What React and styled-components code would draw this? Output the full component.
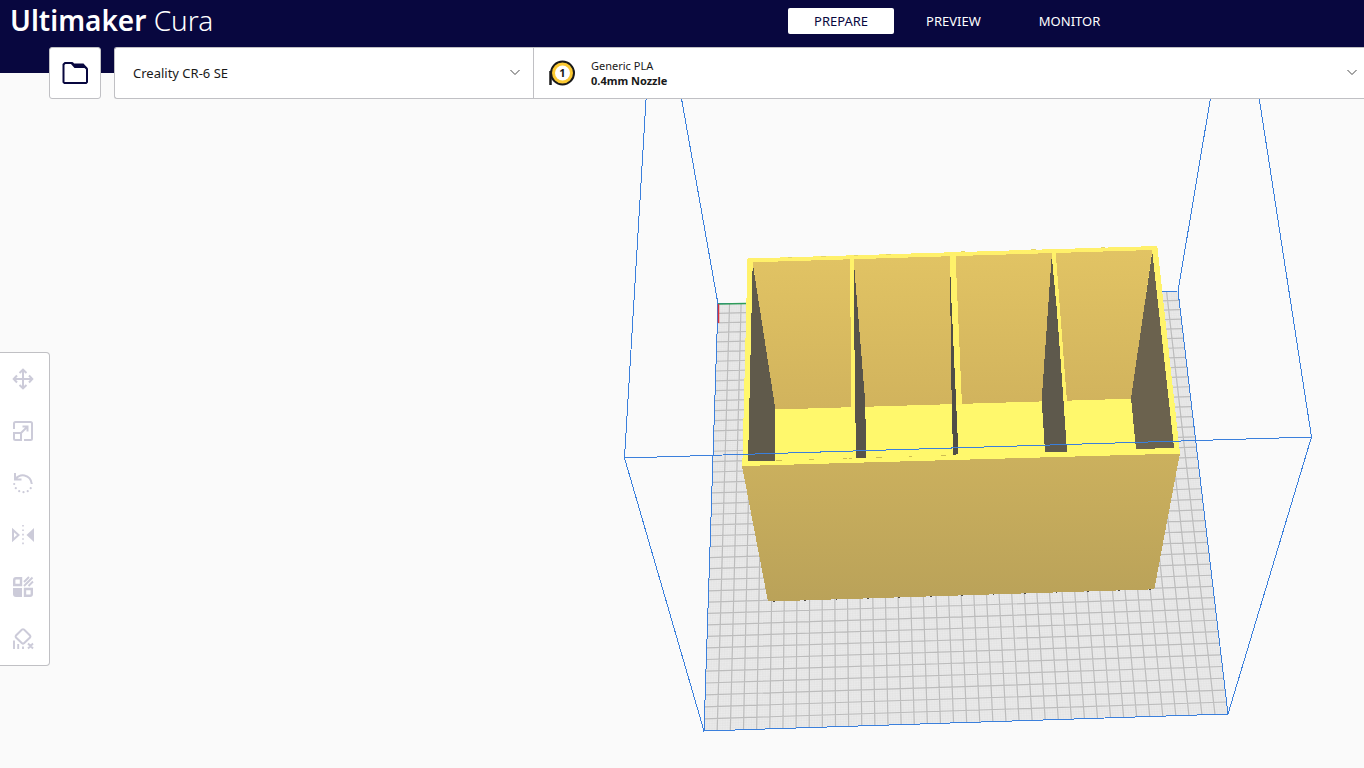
import React from "react";
import styled, { createGlobalStyle } from "styled-components";

const tools = [
  { name: "Move", icon: <MoveIcon /> },
  { name: "Scale", icon: <ScaleIcon /> },
  { name: "Rotate", icon: <RotateIcon /> },
  { name: "Mirror", icon: <MirrorIcon /> },
  { name: "Per Model Settings", icon: <MeshIcon /> },
  { name: "Support Blocker", icon: <BlockerIcon /> },
];

const App = () => {
  return (
    <Window>
      <GlobalStyle />
      <Scene />
      <Interface>
        <Header>
          <Logo>
            Ultimaker <span>Cura</span>
          </Logo>
          <Stages>
            <Stage $active>PREPARE</Stage>
            <Stage>PREVIEW</Stage>
            <Stage>MONITOR</Stage>
          </Stages>
        </Header>
        <ConfigRow>
          <OpenButton aria-label="Open file">
            <FolderIcon />
          </OpenButton>
          <Selectors>
            <Printer>
              <span>Creality CR-6 SE</span>
              <Chevron />
            </Printer>
            <Material>
              <SpoolIcon />
              <MaterialText>
                Generic PLA
                <strong>0.4mm Nozzle</strong>
              </MaterialText>
              <Chevron />
            </Material>
          </Selectors>
        </ConfigRow>
        <Toolbar>
          {tools.map((tool) => (
            <Tool key={tool.name} aria-label={tool.name}>
              {tool.icon}
            </Tool>
          ))}
        </Toolbar>
      </Interface>
    </Window>
  );
};

// Build plate corners: back left, back right, front right, front left
const plate = [
  [718, 304],
  [1178, 291],
  [1228, 714],
  [704, 731],
];
const cells = 40;

// Perspective mapping of the unit square onto the plate
const project = (u, v) => {
  const [[x0, y0], [x1, y1], [x2, y2], [x3, y3]] = plate;
  const dx1 = x1 - x2;
  const dx2 = x3 - x2;
  const dx3 = x0 - x1 + x2 - x3;
  const dy1 = y1 - y2;
  const dy2 = y3 - y2;
  const dy3 = y0 - y1 + y2 - y3;
  const det = dx1 * dy2 - dx2 * dy1;
  const g = (dx3 * dy2 - dx2 * dy3) / det;
  const h = (dx1 * dy3 - dx3 * dy1) / det;
  const w = g * u + h * v + 1;
  const x = ((x1 - x0 + g * x1) * u + (x3 - x0 + h * x3) * v + x0) / w;
  const y = ((y1 - y0 + g * y1) * u + (y3 - y0 + h * y3) * v + y0) / w;
  return `${x.toFixed(2)} ${y.toFixed(2)}`;
};

const gridPath = (count) => {
  let d = "";
  for (let i = 1; i < count; i++) {
    const t = i / count;
    d += `M${project(t, 0)}L${project(t, 1)}M${project(0, t)}L${project(1, t)}`;
  }
  return d;
};

function Scene() {
  const outline = plate.map((p) => p.join(",")).join(" ");
  return (
    <Canvas viewBox="0 0 1364 768" preserveAspectRatio="xMidYMid slice">
      <defs>
        <linearGradient id="back" x1="0" y1="0" x2="0.03" y2="1">
          <stop offset="0" stopColor="#e2c464" />
          <stop offset="1" stopColor="#d1b35d" />
        </linearGradient>
        <linearGradient id="front" x1="0" y1="0" x2="0.03" y2="1">
          <stop offset="0" stopColor="#ccb15e" />
          <stop offset="1" stopColor="#baa259" />
        </linearGradient>
        <linearGradient id="rim" x1="0" y1="0" x2="0" y2="1">
          <stop offset="0" stopColor="#fff06a" />
          <stop offset="0.7" stopColor="#fff86c" />
        </linearGradient>
      </defs>

      <polygon points={outline} fill="#eaeaea" />
      <path d={gridPath(cells * 5)} stroke="#dedede" strokeWidth="0.3" />
      <path d={gridPath(cells)} stroke="#bcbcbc" strokeWidth="1.2" />

      <g fill="none" stroke="#3a7fdc" shapeRendering="crispEdges">
        <polygon points={outline} />
        <path d="M652 0L624.5 458L704 731M664 0L718 304M1227 0L1178 291M1244 0L1311.5 437L1228 714" />
      </g>
      <path d="M718 304L746 303.5" stroke="#2f9c5a" strokeWidth="1.5" />
      <path d="M718.5 304V323" stroke="#d8303c" strokeWidth="1.5" />

      <g shapeRendering="crispEdges">
        <polygon
          points="742,466 1180,453 1154.3,589.3 768,601.5"
          fill="url(#front)"
        />
        <polygon
          points="747.5,258.5 1157.3,246 1180,453.5 742.3,466"
          fill="url(#rim)"
        />
        <polygon
          points="752.7,262.3 1152.3,250 1131.5,398.7 775,409.5"
          fill="url(#back)"
        />
        <g fill="#fff26a">
          <polygon points="850,258 854.3,258 855.5,410 851.3,410" />
          <polygon points="950,256 955.5,255 962,405 952,405" />
          <polygon points="1051.7,252 1055.7,252 1067,402 1062,402" />
        </g>
        <polygon points="752.7,263 775,407 775,461 748,461" fill="#605a4b" />
        <polygon
          points="854,264 865.3,403 866,458 856,458 854.5,350"
          fill="#57534a"
        />
        <polygon
          points="950,263 951.3,298 958.5,454 953,455 951,368"
          fill="#504e47"
        />
        <polygon
          points="1051.7,256 1056.7,308 1061.7,375 1067,451.7 1045,452 1041.7,400"
          fill="#5e594c"
        />
        <polygon
          points="1152.3,252 1174,447.5 1136,449.5 1131,398"
          fill="#6b624e"
        />
        {/* edges of the mesh showing through the rim */}
        <path
          d="M776 460.5H782M809 459.5H814M843 458.5H847M849 458.5H852M876 457.5H882M909 456.5H912M941 455.5H946"
          stroke="#cdbd52"
        />
        <path
          d="M773 601.5H775M804 600.5H806M836 599.5H837M867 598.5H869M898 597.5H900M930 596.5H932M961 595.5H963M993 594.5H994M1024 593.5H1026M1056 592.5H1057M1087 591.5H1089M1118 590.5H1120M1149 589.5H1151"
          stroke="#4b4740"
        />
        <path
          d="M788 257.5H792M821 256.5H826M854 255.5H858M886 254.5H891M961 251.5H965M1031 249.5H1036M1101 247.5H1105"
          stroke="#e6d664"
        />
        <path d="M624.5 458L1311.5 437" stroke="#3a7fdc" />
      </g>
    </Canvas>
  );
}

function FolderIcon() {
  return (
    <svg width="30" height="30" viewBox="0 0 30 30" fill="none">
      <path
        d="M5 5H11.5L15 9H25L27 11V24L26 25H4.5L3.5 24V6.5Z"
        stroke="#08073f"
        strokeWidth="2"
        strokeLinejoin="round"
      />
      <path d="M11 4.200H13L14 5.5H23.5L27.5 10H15.5Z" fill="#08073f" />
    </svg>
  );
}

function SpoolIcon() {
  return (
    <svg width="28" height="28" viewBox="0 0 28 28">
      <path d="M2.5 12V26" stroke="#191919" strokeWidth="2.5" />
      <circle cx="14.5" cy="14" r="11.5" fill="#fbc932" stroke="#191919" strokeWidth="2" />
      <circle cx="14.5" cy="14" r="7.5" fill="#fff" />
      <text
        x="14.5"
        y="18"
        textAnchor="middle"
        fontSize="11"
        fontWeight="700"
        fill="#191919"
      >
        1
      </text>
    </svg>
  );
}

function Chevron() {
  return (
    <svg width="10" height="10" viewBox="0 0 10 10" fill="none">
      <path d="M0.5 2L5 6.5L9.5 2" stroke="#4a4a4a" />
    </svg>
  );
}

function MoveIcon() {
  return (
    <svg width="22" height="22" viewBox="0 0 22 22" fill="none">
      <path
        d="M11 2V20M2 11H20M7.5 5L11 1.7L14.5 5M7.5 17L11 20.3L14.5 17M5 7.5L1.7 11L5 14.5M17 7.5L20.3 11L17 14.5"
        stroke="currentColor"
        strokeWidth="2"
      />
    </svg>
  );
}

function ScaleIcon() {
  return (
    <svg width="22" height="22" viewBox="0 0 22 22" fill="none">
      <path
        d="M2 9V3.5Q2 2 3.5 2H18.5Q20 2 20 3.5V18.5Q20 20 18.5 20H12M10.5 6.5H15.5V11.5M15.5 6.5L9 13M2 13H9V20H3.5Q2 20 2 18.5Z"
        stroke="currentColor"
        strokeWidth="2"
      />
    </svg>
  );
}

function RotateIcon() {
  return (
    <svg width="22" height="22" viewBox="0 0 22 22" fill="none">
      <path
        d="M3 1V7.5H9.5M3 7.5Q7 2.500 12.5 3.5Q19 5 19.8 12"
        stroke="currentColor"
        strokeWidth="2"
      />
      <g fill="currentColor">
        <circle cx="2.2" cy="12" r="1.1" />
        <circle cx="3.8" cy="16.2" r="1.1" />
        <circle cx="7.2" cy="19.2" r="1.1" />
        <circle cx="11.5" cy="20.2" r="1.1" />
        <circle cx="15.7" cy="19.2" r="1.1" />
        <circle cx="18.7" cy="16.2" r="1.1" />
      </g>
    </svg>
  );
}

function MirrorIcon() {
  return (
    <svg width="24" height="22" viewBox="0 0 24 22" fill="none">
      <path d="M2 6V16L7.5 11Z" stroke="currentColor" strokeWidth="2" />
      <path d="M23 4V18L15.5 11Z" fill="currentColor" />
      <path
        d="M12 1V21"
        stroke="currentColor"
        strokeWidth="1.6"
        strokeDasharray="1.6 2.8"
      />
    </svg>
  );
}

function MeshIcon() {
  return (
    <svg width="22" height="22" viewBox="0 0 22 22" fill="none">
      <path
        d="M2.2 9V4Q2.200 2.200 4 2.2H9V9ZM13 13H19.8V18Q19.8 19.8 18 19.8H13Z"
        stroke="currentColor"
        strokeWidth="2.4"
      />
      <path d="M1 12H10V21H4Q1 21 1 18Z" fill="currentColor" />
      <path
        d="M12 6L17 1M12 10L20.5 1.5M16.5 10L21 5.5"
        stroke="currentColor"
        strokeWidth="1.9"
      />
    </svg>
  );
}

function BlockerIcon() {
  return (
    <svg width="22" height="22" viewBox="0 0 22 22" fill="none">
      <path
        d="M10 1.5Q11 0.8 12 1.5L18 7.5Q18.8 8.5 18 9.5L12 15.2Q11 16 10 15.2L4 9.5Q3.3 8.5 4 7.5Z"
        stroke="currentColor"
        strokeWidth="2"
      />
      <path
        d="M2 12.5V21M6.2 16V21M11 18.5V21M16 15.5L21 20.5M21 15.5L16 20.5"
        stroke="currentColor"
        strokeWidth="1.9"
      />
    </svg>
  );
}

const GlobalStyle = createGlobalStyle`
  * {
    box-sizing: border-box;
  }
  body {
    margin: 0;
    background: #fafafa;
    color: #191919;
    font-family: "Noto Sans", sans-serif;
    font-size: 13px;
  }
  button {
    font: inherit;
    color: inherit;
    cursor: pointer;
  }
  svg {
    display: block;
    flex-shrink: 0;
  }
`;

const Window = styled.div`
  display: grid;
  min-height: 100vh;
`;

const Canvas = styled.svg`
  grid-area: 1 / 1;
  width: 100%;
  height: 100%;
`;

const Interface = styled.div`
  grid-area: 1 / 1;
  display: flex;
  flex-direction: column;
`;

const Header = styled.header`
  display: grid;
  grid-template-columns: 52fr 38fr;
  align-items: start;
  height: 73px;
  background: #08073f;
  color: #ffffff;
`;

const Logo = styled.div`
  padding-left: 10px;
  font-size: 28px;
  font-weight: 600;
  line-height: 40px;
  span {
    font-weight: 300;
  }
`;

const Stages = styled.nav`
  display: flex;
  gap: 6px;
  padding-top: 8px;
`;

const Stage = styled.button`
  height: 26px;
  padding: 0 26px;
  border: none;
  border-radius: 2px;
  background: ${(props) => (props.$active ? "#ffffff" : "transparent")};
  color: ${(props) => (props.$active ? "#08073f" : "#ffffff")};
`;

const ConfigRow = styled.div`
  display: flex;
  gap: 13px;
  margin-top: -26px;
  padding-left: 49px;
`;

const OpenButton = styled.button`
  display: flex;
  align-items: center;
  justify-content: center;
  width: 52px;
  height: 52px;
  padding: 0;
  border: 1px solid #c0c0c4;
  border-radius: 3px;
  background: #ffffff;
`;

const Selectors = styled.div`
  display: flex;
  flex: 1;
  height: 52px;
  border: 1px solid #c0c0c4;
  border-right: none;
  border-radius: 3px 0 0 3px;
  background: #ffffff;
`;

const Selector = styled.button`
  display: flex;
  align-items: center;
  padding: 0;
  border: none;
  background: transparent;
  text-align: left;
`;

const Printer = styled(Selector)`
  justify-content: space-between;
  width: 419px;
  padding: 0 13px 0 18px;
  border-right: 1px solid #c0c0c4;
`;

const Material = styled(Selector)`
  flex: 1;
  gap: 15px;
  padding: 0 7px 0 14px;
`;

const MaterialText = styled.span`
  flex: 1;
  font-size: 11px;
  line-height: 15px;
  strong {
    display: block;
  }
`;

const Toolbar = styled.div`
  display: flex;
  flex-direction: column;
  align-self: flex-start;
  width: 50px;
  margin-top: 253px;
  border: 1px solid #c0c0c4;
  border-left: none;
  border-radius: 0 4px 4px 0;
  background: #ffffff;
`;

const Tool = styled.button`
  display: flex;
  align-items: center;
  justify-content: center;
  height: 52px;
  padding: 0 3px 0 0;
  border: none;
  background: transparent;
  color: #cccbd9;
`;

export default App;
